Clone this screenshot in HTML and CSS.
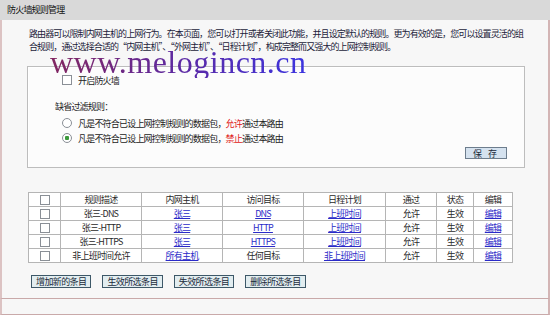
FILE: index.html
```html
<!DOCTYPE html>
<html lang="zh-CN">
<head>
    <meta charset="UTF-8">
    <title>防火墙规则管理</title>
    <link rel="stylesheet" href="styles.css">
</head>
<body>
    <div class="page">
        <div class="title">防火墙规则管理</div>
        <div class="body">
            <p class="desc">路由器可以限制内网主机的上网行为。在本页面，您可以打开或者关闭此功能，并且设定默认的规则。更为有效的是，您可以设置灵活的组<br>合规则，通过选择合适的“内网主机”、“外网主机”、“日程计划”，构成完整而又强大的上网控制规则。</p>

            <div class="watermark">www.melogincn.cn</div>

            <div class="group">
                <label class="row first"><input type="checkbox" class="box"><span>开启防火墙</span></label>
                <div class="subhead">缺省过滤规则：</div>
                <label class="row"><input type="radio" name="rule" class="radio"><span>凡是不符合已设上网控制规则的数据包，<em class="red">允许</em>通过本路由</span></label>
                <label class="row"><input type="radio" name="rule" class="radio" checked><span>凡是不符合已设上网控制规则的数据包，<em class="red">禁止</em>通过本路由</span></label>
                <div class="save-row"><button class="btn save">保 存</button></div>
            </div>

            <table class="rules">
                <colgroup>
                    <col style="width:32px"><col style="width:81px"><col style="width:81px"><col style="width:81px">
                    <col style="width:82px"><col style="width:51px"><col style="width:37px"><col style="width:39px">
                </colgroup>
                <tr>
                    <td><input type="checkbox" class="box"></td>
                    <td>规则描述</td><td>内网主机</td><td>访问目标</td><td>日程计划</td><td>通过</td><td>状态</td><td>编辑</td>
                </tr>
                <tr>
                    <td><input type="checkbox" class="box"></td>
                    <td>张三-DNS</td><td><a href="#">张三</a></td><td><a href="#">DNS</a></td><td><a href="#">上班时间</a></td><td>允许</td><td>生效</td><td><a href="#">编辑</a></td>
                </tr>
                <tr>
                    <td><input type="checkbox" class="box"></td>
                    <td>张三-HTTP</td><td><a href="#">张三</a></td><td><a href="#">HTTP</a></td><td><a href="#">上班时间</a></td><td>允许</td><td>生效</td><td><a href="#">编辑</a></td>
                </tr>
                <tr>
                    <td><input type="checkbox" class="box"></td>
                    <td>张三-HTTPS</td><td><a href="#">张三</a></td><td><a href="#">HTTPS</a></td><td><a href="#">上班时间</a></td><td>允许</td><td>生效</td><td><a href="#">编辑</a></td>
                </tr>
                <tr>
                    <td><input type="checkbox" class="box"></td>
                    <td>非上班时间允许</td><td><a href="#">所有主机</a></td><td>任何目标</td><td><a href="#">非上班时间</a></td><td>允许</td><td>生效</td><td><a href="#">编辑</a></td>
                </tr>
            </table>

            <div class="actions">
                <button class="btn">增加新的条目</button>
                <button class="btn">生效所选条目</button>
                <button class="btn">失效所选条目</button>
                <button class="btn">删除所选条目</button>
            </div>
        </div>
        <div class="footer"></div>
    </div>
</body>
</html>
```

FILE: styles.css
```css
body {
    margin: 0;
    background-color: #fff;
    font-family: "Noto Sans CJK SC", "Liberation Sans", sans-serif;
    font-size: 9px;
    color: #222;
}
.page {
    width: 550px;
}
.title {
    height: 20px;
    line-height: 20px;
    padding-left: 7px;
    background-color: #d9d9d9;
    color: #111;
    letter-spacing: -0.8px;
}
.body {
    position: relative;
    padding: 7px 0 10px 0;
    background-color: #f7f7f7;
    border-left: 2px solid #dcc3c3;
    border-right: 2px solid #d3b5b5;
}
.desc {
    margin: 0 0 0 27px;
    line-height: 13px;
    white-space: nowrap;
    letter-spacing: -0.9px;
    color: #1c1c3a;
}
.watermark {
    position: absolute;
    left: 48px;
    top: 26px;
    font-family: "Liberation Serif", serif;
    font-size: 32px;
    line-height: 32px;
    letter-spacing: 0.5px;
    background: linear-gradient(90deg, #822660, #5a2aa8 55%, #3b34e0);
    -webkit-background-clip: text;
    background-clip: text;
    -webkit-text-fill-color: transparent;
}
.group {
    box-sizing: border-box;
    width: 498px;
    height: 102px;
    margin: 13px 0 0 25px;
    padding: 6px 0 0 34px;
    background-color: #fcfcfc;
    border: 1px solid #bdbdbd;
    box-shadow: inset 1px 1px 0 #fff;
}
.row {
    display: flex;
    align-items: center;
    height: 14px;
    margin-top: 1px;
    letter-spacing: -0.8px;
}
.row.first {
    margin-top: 0;
}
.row .box,
.row .radio {
    margin: 0 6px 0 0;
}
.subhead {
    height: 14px;
    line-height: 14px;
    margin: 13px 0 2px -7px;
    letter-spacing: -0.8px;
}
.red {
    font-style: normal;
    color: #e01818;
}
.box {
    appearance: none;
    width: 10px;
    height: 10px;
    margin: 0;
    background-color: #fff;
    border: 1px solid #8a8f96;
    box-sizing: border-box;
    vertical-align: middle;
}
.radio {
    appearance: none;
    width: 10px;
    height: 10px;
    margin: 0;
    border: 1px solid #8a8f96;
    border-radius: 50%;
    background-color: #fff;
    box-sizing: border-box;
}
.radio:checked {
    background: radial-gradient(circle, #3c9a3c 0 2px, #fff 2.5px);
}
.save-row {
    display: flex;
    justify-content: flex-end;
    padding-right: 17px;
    margin-top: 2px;
}
.btn {
    height: 13px;
    padding: 0 4px;
    font-family: inherit;
    font-size: 9px;
    line-height: 11px;
    letter-spacing: -0.6px;
    color: #1a2a3a;
    background-color: #e2edf0;
    border: 1px solid #3d5868;
    border-radius: 0;
    cursor: pointer;
}
.save {
    width: 42px;
    height: 12px;
    background-color: #d5e2ef;
    border-color: #6d7d8d;
    letter-spacing: 2px;
}
.rules {
    margin: 24px 0 0 26px;
    width: 484px;
    table-layout: fixed;
    border-collapse: collapse;
    background-color: #fff;
}
.rules td {
    height: 13px;
    padding: 0;
    line-height: 13px;
    text-align: center;
    border: 1px solid #b5b5b5;
    letter-spacing: -0.8px;
    white-space: nowrap;
    color: #2a2a2a;
}
.rules td .box {
    display: block;
    margin: 0 auto;
}
.rules a {
    color: #2b2bc8;
}
.actions {
    display: flex;
    gap: 11px;
    margin: 12px 0 0 29px;
}
.footer {
    height: 15px;
    background-color: #f7f7f7;
    border: 1px solid #c9a9a9;
    border-width: 1px 2px 1px 2px;
    border-left-color: #dcc3c3;
    border-right-color: #d3b5b5;
}
```
